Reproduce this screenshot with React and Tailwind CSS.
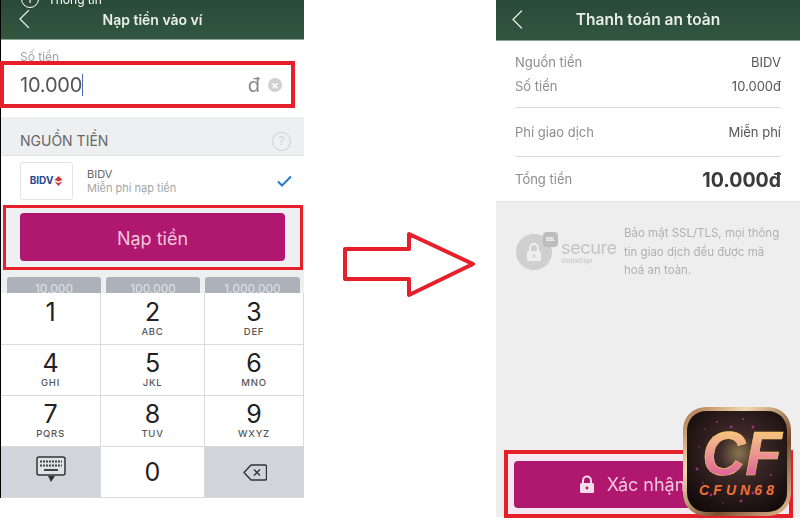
import React from "react";

function Chevron({ className }) {
  return (
    <svg className={className} viewBox="0 0 12 20" fill="none" stroke="#e4ebe6" strokeWidth="1.3" strokeLinecap="round" strokeLinejoin="round">
      <path d="M10.5 1.5 2 10l8.5 8.5" />
    </svg>
  );
}

function Header({ title, children, h }) {
  return (
    <div className={`relative shrink-0 overflow-hidden flex items-center justify-center bg-gradient-to-b from-[#2a4a38] to-[#32563f] border-b border-[#8fa397] ${h}`}>
      {children}
      <span className="text-[#e9eeea] font-semibold">{title}</span>
    </div>
  );
}

function Key({ d, s, gray, pad, children }) {
  return (
    <div className={`flex flex-col items-center justify-start border-b border-r border-[#d9dadd] last:border-r-0 ${pad || "pt-[6px]"} ${gray ? "bg-[#d1d4da]" : "bg-white"}`}>
      {children ? children : (
        <>
          <span className="text-[25px] leading-[25px] text-[#222]">{d}</span>
          {s ? <span className="text-[9.5px] leading-[11px] mt-[1px] font-medium tracking-[0.08em] text-[#555]">{s}</span> : null}
        </>
      )}
    </div>
  );
}

function Row({ l, r, big }) {
  return (
    <div className="flex items-center justify-between">
      <span className="text-[13px] text-[#8e8e8e]">{l}</span>
      <span className={big ? "text-[19.5px] font-bold text-[#3a3a3a]" : "text-[13px] text-[#555]"}>{r}</span>
    </div>
  );
}

function Logo() {
  const dust = [[22,22],[34,15],[48,20],[78,78],[88,68],[70,86],[16,40],[60,12],[28,88],[42,28],[30,30],[70,20],[82,30],[92,46],[14,62],[20,76],[84,86],[58,94],[40,96],[74,40]];
  return (
    <svg className="absolute left-[683px] top-[407px] rounded-[22px]" width="108" height="109" viewBox="0 0 108 109">
      <defs>
        <linearGradient id="rim" x1="0" y1="0" x2="1" y2="1">
          <stop offset="0" stopColor="#a86f47" />
          <stop offset="0.3" stopColor="#f3d9b0" />
          <stop offset="0.65" stopColor="#7a4c2c" />
          <stop offset="1" stopColor="#e8c49a" />
        </linearGradient>
        <radialGradient id="bg" cx="0.52" cy="0.42" r="0.65">
          <stop offset="0" stopColor="#8a7650" />
          <stop offset="0.3" stopColor="#3f2a2a" />
          <stop offset="1" stopColor="#140c0b" />
        </radialGradient>
        <linearGradient id="cf" x1="0" y1="0" x2="0" y2="1">
          <stop offset="0" stopColor="#ffe04d" />
          <stop offset="0.3" stopColor="#f2b58c" />
          <stop offset="1" stopColor="#d6489e" />
        </linearGradient>
      </defs>
      <rect x="0" y="0" width="108" height="109" rx="22" fill="url(#rim)" />
      <rect x="4" y="4" width="100" height="101" rx="19" fill="url(#bg)" />
      <g fill="#c0389a" opacity="0.75">
        {dust.map(([x, y], i) => <circle key={i} cx={x} cy={y} r={0.8 + (i % 3) * 0.3} />)}
      </g>
      <text x="19" y="68" textLength="80" lengthAdjust="spacingAndGlyphs" fontFamily="'Liberation Sans', sans-serif" fontSize="63" fontWeight="700" fontStyle="italic" fill="url(#cf)" stroke="#ffcf5a" strokeWidth="0.5">CF</text>
      <text x="16" y="88" textLength="75" fontFamily="'Liberation Sans', sans-serif" fontSize="14" fontWeight="700" fontStyle="italic" fill="#ef6f3a">CFUN68</text>
    </svg>
  );
}

export default function App() {
  return (
    <div className="relative w-[800px] h-[525px] bg-white overflow-hidden flex items-start font-['Inter','Noto_Sans',sans-serif]">
      {/* Left phone */}
      <div className="w-[304px] h-[498px] shrink-0 flex flex-col border-l border-black blur-[0.5px]">
        <Header title="Nạp tiền vào ví" h="h-[40px] text-[14px]">
          <div className="absolute left-[20px] top-[-10px] w-[18px] h-[18px] rounded-full border border-white text-white text-[11px] leading-[16px] text-center">i</div>
          <span className="absolute left-[47px] top-[-9px] text-[12px] text-white">Thông tin</span>
          <Chevron className="absolute left-[17px] top-[9px] w-[12px] h-[20px]" />
        </Header>

        <div className="h-[77px] shrink-0 bg-white relative">
          <div className="h-[21px] pl-[19px] pt-[9px] overflow-hidden text-[12px] leading-[16px] text-[#a3a3a3]">Số tiền</div>
          <div className="ml-[-1px] w-[295px] h-[47px] border-[4px] border-[#e5202a] flex items-center pl-[16px] pr-[9px]">
            <span className="text-[20px] text-[#555] tracking-[-0.01em]">10.000</span>
            <span className="w-px h-[22px] bg-[#4a6fc0]"></span>
            <span className="ml-auto text-[20px] text-[#8a8a8a]">đ</span>
            <span className="ml-[8px] w-[14px] h-[14px] rounded-full bg-[#d0d0d0] text-white text-[11px] leading-[14px] text-center font-bold">×</span>
          </div>
        </div>

        <div className="h-[39px] shrink-0 bg-[#eeeff1] border-b border-[#e2e2e2] flex items-end pb-[4px] pl-[19px] pr-[13px] justify-between">
          <span className="text-[14px] leading-[20px] text-[#666]">NGUỒN TIỀN</span>
          <span className="w-[19px] h-[19px] rounded-full border-[1.5px] border-[#cfcfcf] text-[#cfcfcf] text-[12px] leading-[16px] text-center">?</span>
        </div>

        <div className="h-[49px] shrink-0 bg-white flex items-center pl-[19px] pr-[12px]">
          <div className="w-[53px] h-[38px] rounded-[3px] border border-[#e3e3e3] flex items-center justify-center gap-px">
            <span className="text-[10px] font-bold text-[#27498f]">BIDV</span>
            <svg width="9" height="10" viewBox="0 0 9 10">
              <path d="M4.5 0 8.5 4 4.5 5.6.5 4Z" fill="#d2383c" />
              <path d="M.5 5.5 4.5 7l4-1.5L4.5 10Z" fill="#d2383c" />
            </svg>
          </div>
          <div className="ml-[14px] flex flex-col">
            <span className="text-[11px] leading-[14px] text-[#666]">BIDV</span>
            <span className="text-[11px] leading-[14px] text-[#a5a5a5]">Miễn phí nạp tiền</span>
          </div>
          <svg className="ml-auto" width="15" height="12" viewBox="0 0 15 12" fill="none" stroke="#2a78c0" strokeWidth="2">
            <path d="M1 6.5 5 10.5 14 1.5" />
          </svg>
        </div>

        <div className="flex-1 min-h-0 bg-[#eeeff1] flex flex-col">
          <div className="ml-[2px] w-[300px] h-[65px] shrink-0 border-[3px] border-[#e5202a] pl-[14px] pr-[15px] pt-[5px]">
            <div className="h-[48px] rounded-[4px] bg-[#b0176f] flex items-center justify-center pt-[3px] text-[18px] text-[#f1c6dd]">Nạp tiền</div>
          </div>
          <div className="h-[23px] shrink-0 overflow-hidden grid grid-cols-[94px_94px_95px] gap-x-[5px] pl-[6px] pt-[7px]">
            <div className="h-[30px] rounded-[3px] bg-[#adb1ba] text-center text-[12px] leading-[24px] text-[#dfe1e5]">10.000</div>
            <div className="h-[30px] rounded-[3px] bg-[#adb1ba] text-center text-[12px] leading-[24px] text-[#dfe1e5]">100.000</div>
            <div className="h-[30px] rounded-[3px] bg-[#adb1ba] text-center text-[12px] leading-[24px] text-[#dfe1e5]">1.000.000</div>
          </div>
          <div className="h-[205px] shrink-0 grid grid-cols-[100px_104px_99px] grid-rows-[52px_51px_51px_51px]">
            <Key d="1" pad="pt-[7px]" /><Key d="2" s="ABC" pad="pt-[7px]" /><Key d="3" s="DEF" pad="pt-[7px]" />
            <Key d="4" s="GHI" /><Key d="5" s="JKL" /><Key d="6" s="MNO" />
            <Key d="7" s="PQRS" /><Key d="8" s="TUV" /><Key d="9" s="WXYZ" />
            <Key gray pad="pt-0">
              <svg className="mt-[9px]" width="30" height="27" viewBox="0 0 30 27" fill="none">
                <rect x="1" y="1" width="28" height="18" rx="2" fill="#dfe1e5" stroke="#333" strokeWidth="1.5" />
                <path d="M4 5.5h22M4 9.5h22" stroke="#444" strokeWidth="2" strokeDasharray="2 1" />
                <path d="M8 14h14" stroke="#444" strokeWidth="2" />
                <path d="M12 20h7l-4 6z" fill="#333" />
              </svg>
            </Key>
            <Key d="0" pad="pt-[13px]" />
            <Key gray pad="pt-0">
              <svg className="mt-[17px]" width="24" height="17" viewBox="0 0 24 17" fill="none" stroke="#333" strokeWidth="1.4" strokeLinejoin="round">
                <path d="M8 1h14a1.5 1.5 0 0 1 1.5 1.5v12A1.5 1.5 0 0 1 22 16H8L1 8.5Z" />
                <path d="M11 5.5 17 11.5M17 5.5 11 11.5" />
              </svg>
            </Key>
          </div>
        </div>
      </div>

      {/* Arrow */}
      <svg className="ml-[38px] mt-[231px] shrink-0" width="134" height="67" viewBox="0 0 134 67" fill="none" stroke="#e5202a" strokeWidth="4" strokeLinejoin="round">
        <path d="M3 18H67V3L131 33 67 64V48H3Z" />
      </svg>

      {/* Right phone */}
      <div className="ml-[20px] w-[304px] h-[517px] shrink-0 flex flex-col bg-[#eeeeee] blur-[0.5px]">
        <Header title="Thanh toán an toàn" h="h-[41px] text-[15.5px]">
          <Chevron className="absolute left-[15px] top-[9px] w-[12px] h-[21px]" />
        </Header>

        <div className="h-[161px] shrink-0 bg-white border-b border-[#e4e4e4] px-[19px] pt-[12px] flex flex-col">
          <Row l="Nguồn tiền" r="BIDV" />
          <div className="mt-[4px]"><Row l="Số tiền" r="10.000đ" /></div>
          <div className="mt-[11px] h-px bg-[#dcdcdc]"></div>
          <div className="mt-[15px]"><Row l="Phí giao dịch" r="Miễn phí" /></div>
          <div className="mt-[13px] h-px bg-[#dcdcdc]"></div>
          <div className="mt-[9px]"><Row l="Tổng tiền" r="10.000đ" big /></div>
        </div>

        <div className="flex items-start pl-[20px] pr-[19px] pt-[22px]">
          <div className="w-[108px] h-[44px] shrink-0 flex items-center mt-[6px]">
            <div className="relative w-[36px] h-[36px] rounded-full bg-[#cfcfcf] flex items-center justify-center shrink-0">
              <svg width="16" height="20" viewBox="0 0 16 20" fill="none">
                <path d="M4 9V6a4 4 0 0 1 8 0v3" stroke="#eee" strokeWidth="2" />
                <rect x="1" y="9" width="14" height="10" rx="1.5" fill="#eee" />
                <circle cx="8" cy="14" r="1.5" fill="#cfcfcf" />
              </svg>
              <span className="absolute right-[-6px] top-[-2px] w-[15px] h-[15px] rounded-[4px] bg-[#bdbdbd] text-[5px] leading-[15px] text-center text-white font-bold">SSL</span>
            </div>
            <div className="ml-[9px] flex flex-col leading-none">
              <span className="text-[18px] leading-[18px] tracking-[-0.02em] text-[#c4c4c4]">secure</span>
              <span className="text-[6px] leading-[8px] text-[#cccccc] font-semibold">GlobalSign</span>
            </div>
          </div>
          <p className="w-[157px] text-[11.5px] leading-[18.5px] text-[#b0b0b0]">Bảo mật SSL/TLS, mọi thông tin giao dịch đều được mã hoá an toàn.</p>
        </div>

        <div className="mt-auto ml-[8px] mb-[-1px] w-[289px] h-[68px] border-[4px] border-[#e5202a] bg-[#f3e8f0] pl-[6px] pr-[6px] pt-[7px]">
          <div className="h-[47px] rounded-[4px] bg-[#b0176f] flex items-center justify-center pr-[33px] gap-[12px] text-[18px] text-[#efc6dd]">
            <svg width="16" height="19" viewBox="0 0 16 19" fill="none">
              <path d="M4 8V5.5a4 4 0 0 1 8 0V8" stroke="#f5dcea" strokeWidth="2" />
              <rect x="1" y="8" width="14" height="10" rx="1.5" fill="#f5dcea" />
              <circle cx="8" cy="13" r="1.4" fill="#b0176f" />
            </svg>
            <span>Xác nhận</span>
          </div>
        </div>
      </div>

      <Logo />
    </div>
  );
}
